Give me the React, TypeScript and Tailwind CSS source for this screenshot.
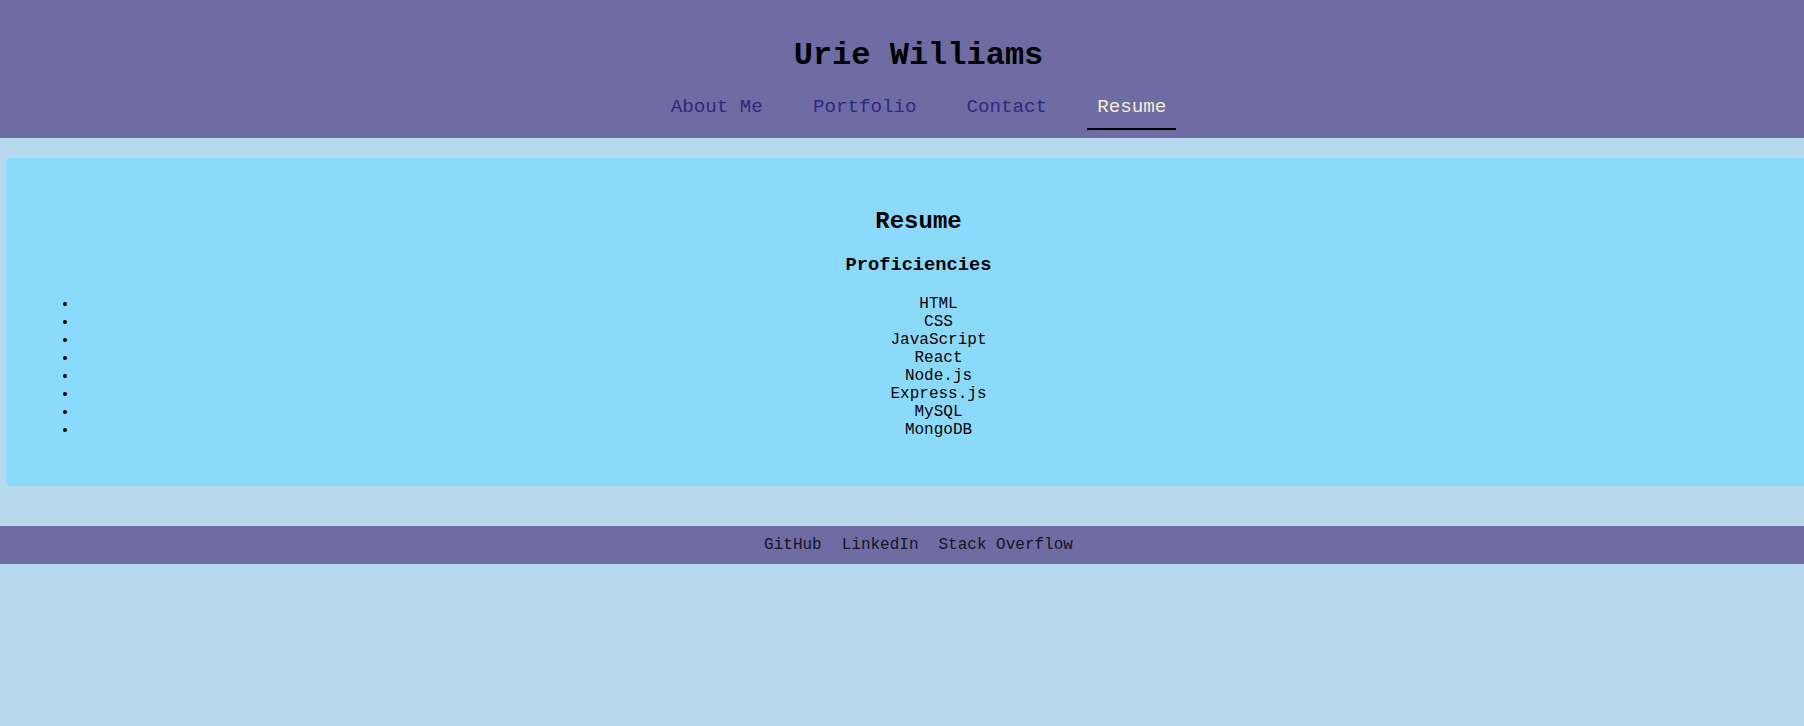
import React from 'react';

const links = ['About Me', 'Portfolio', 'Contact', 'Resume'];
const skills = ['HTML', 'CSS', 'JavaScript', 'React', 'Node.js', 'Express.js', 'MySQL', 'MongoDB'];
const socials = ['GitHub', 'LinkedIn', 'Stack Overflow'];

function Header() {
    return (
        <header className="bg-[#6e6ca3] h-[138px] pt-[38px] text-center">
            <h1 className="text-[32px] leading-[36px] font-bold text-black">Urie Williams</h1>
            <nav className="mt-[22px] flex justify-center gap-[30px]">
                {links.map((link) => (
                    <a
                        key={link}
                        href="#"
                        className={`px-[10px] pb-[10px] text-[19.2px] leading-[22px] border-b-2 ${link === 'Resume' ? 'text-[#f4ecd4] border-black' : 'text-[#2d2b7c] border-transparent'}`}
                    >
                        {link}
                    </a>
                ))}
            </nav>
        </header>
    )
}

function Resume() {
    return (
        <section className="mx-[6px] mt-[20px] rounded-[5px] bg-[#8adbfb] px-8 pt-[30px] pb-[31px] text-black">
            <h2 className="my-[19.92px] text-center text-[24px] leading-[27px] font-bold">Resume</h2>
            <h3 className="my-[18.72px] text-center text-[18.72px] leading-[21px] font-bold">Proficiencies</h3>
            <ul className="mt-[17px] mb-4 list-disc pl-10">
                {skills.map((skill) => (
                    <li key={skill} className="text-center text-[16px] leading-[18px]">{skill}</li>
                ))}
            </ul>
        </section>
    )
}

function Footer() {
    return (
        <footer className="mt-10 bg-[#6e6ca3] py-[10px] flex justify-center gap-[20px] text-[16px] leading-[18px] text-[#151525]">
            {socials.map((s) => (
                <a key={s} href="#">{s}</a>
            ))}
        </footer>
    )
}

export default function App() {
    return (
        <div className="min-h-screen overflow-x-hidden bg-[#b5d8ec] font-['Liberation_Mono','Courier_New',monospace]">
            <div className="w-[1837px]">
                <Header />
                <Resume />
                <Footer />
            </div>
        </div>
    )
}
